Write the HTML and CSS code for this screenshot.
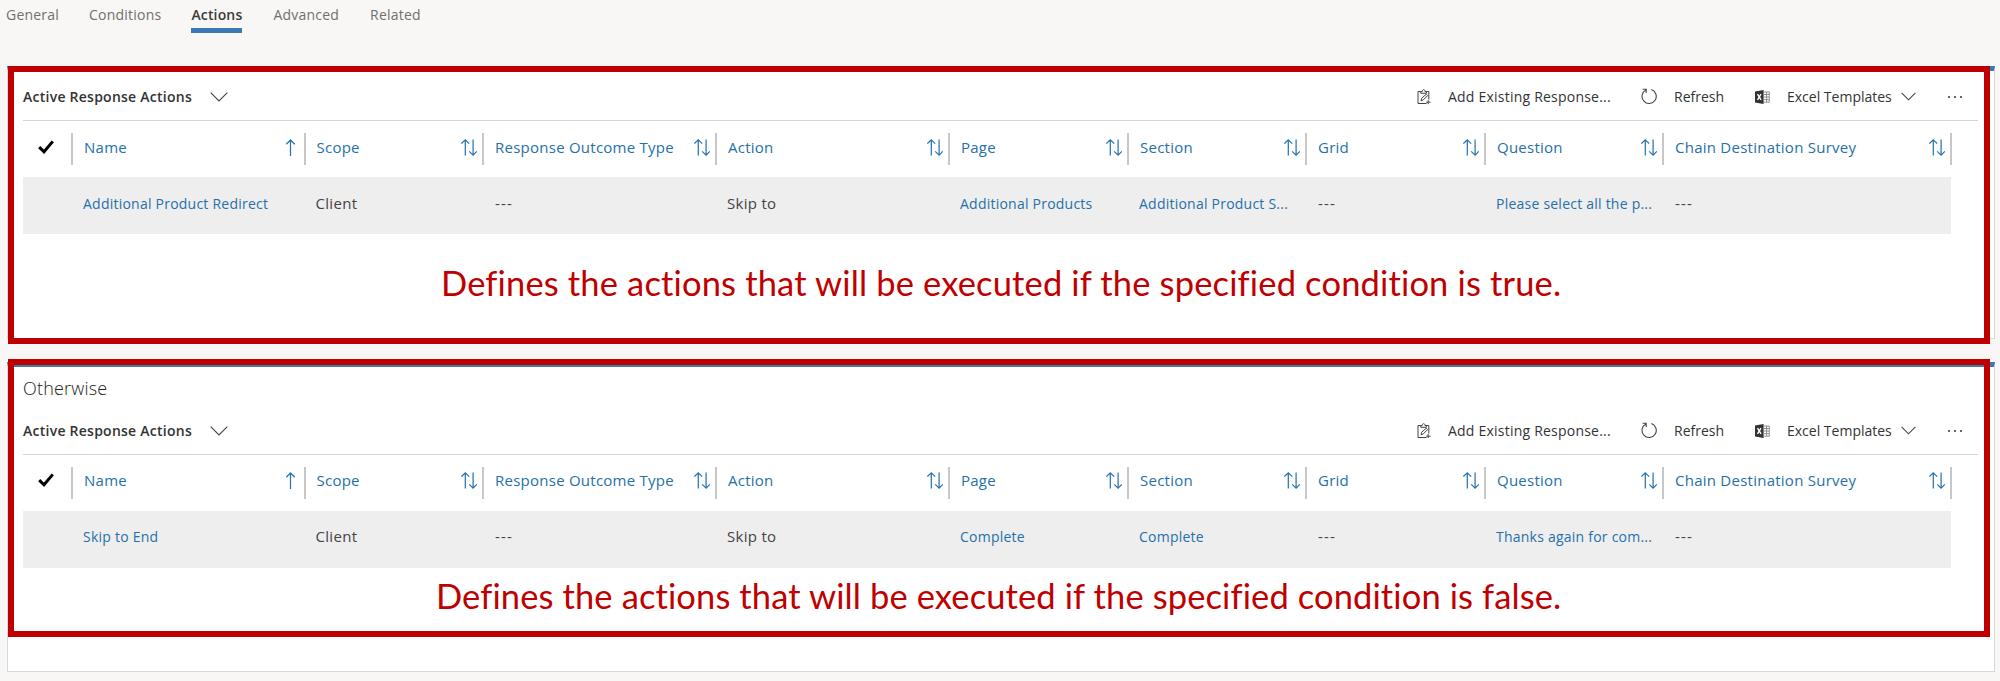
FILE: index.html
```html
<!DOCTYPE html>
<html lang="en">
<head>
<meta charset="utf-8">
<title>Response Actions</title>
<link rel="stylesheet" href="styles.css">
</head>
<body>
<svg class="defs" aria-hidden="true">
  <symbol id="chevron" viewBox="0 0 18 10"><path d="M.7.7 9 9 17.3.7"/></symbol>
  <symbol id="check" viewBox="0 0 16 14"><path d="M1.2 7.2 6 11.8 14.8 1.4"/></symbol>
  <symbol id="up" viewBox="0 0 16 17"><path d="M11.5 17V1M7.3 5.2 11.5 1l4.2 4.2"/></symbol>
  <symbol id="sort" viewBox="0 0 16 17"><path d="M4.3 16.5V1M.4 4.6 4.3.9l3.9 3.7M12.1.5v15.5M8.2 12.4l3.9 3.7 3.7-3.7"/></symbol>
  <symbol id="clip" viewBox="0 0 14 16"><path d="M3.8 2.5H1v12h8.5M9.2 2.5h2.6v8M3.8 4.3V2.6h1.4C5.2 0 8 0 8 2.6h1.4v1.7zM4 11.8l.7-2.6 4.6-4 1.3 1.4-4.3 4.3zM11.2 11.2v4M9.2 13.2h4.4"/></symbol>
  <symbol id="refresh" viewBox="0 0 16 17"><path d="M10.3 1.6A7.1 7.1 0 1 1 5 2M1.6 1.2H5.2V5"/></symbol>
  <symbol id="excel" viewBox="0 0 15 14"><path class="solid" d="M0 1.6 8.6 0v14L0 12.4z"/><path class="mark" d="m2.5 4.2 3.6 5.7M6 4.2 2.5 9.9"/><path class="sheet" d="M9 2h5.3v10.2H9M9 4.5h5M9 7h5M9 9.6h5M11.6 2v10"/></symbol>
</svg>

<nav class="tabs">
  <a>General</a><a>Conditions</a><a class="active">Actions</a><a>Advanced</a><a>Related</a>
</nav>

<main>
  <section class="panel panel-true">
    <div class="toolbar">
      <span class="view">Active Response Actions</span><svg class="view-chevron"><use href="#chevron"/></svg>
      <div class="commands">
        <svg class="i-clip"><use href="#clip"/></svg><span class="c-add">Add Existing Response...</span>
        <svg class="i-refresh"><use href="#refresh"/></svg><span class="c-refresh">Refresh</span>
        <svg class="i-excel"><use href="#excel"/></svg><span class="c-excel">Excel Templates</span>
        <svg class="i-chevron"><use href="#chevron"/></svg>
        <span class="more"><i></i><i></i><i></i></span>
      </div>
    </div>
    <div class="grid head">
      <div class="pick"><svg><use href="#check"/></svg></div>
      <div><span>Name</span><svg><use href="#up"/></svg></div>
      <div><span>Scope</span><svg><use href="#sort"/></svg></div>
      <div><span>Response Outcome Type</span><svg><use href="#sort"/></svg></div>
      <div><span>Action</span><svg><use href="#sort"/></svg></div>
      <div><span>Page</span><svg><use href="#sort"/></svg></div>
      <div><span>Section</span><svg><use href="#sort"/></svg></div>
      <div><span>Grid</span><svg><use href="#sort"/></svg></div>
      <div><span>Question</span><svg><use href="#sort"/></svg></div>
      <div><span>Chain Destination Survey</span><svg><use href="#sort"/></svg></div>
    </div>
    <div class="grid row">
      <div></div>
      <div class="link">Additional Product Redirect</div>
      <div>Client</div>
      <div class="dash">---</div>
      <div>Skip to</div>
      <div class="link">Additional Products</div>
      <div class="link">Additional Product S...</div>
      <div class="dash">---</div>
      <div class="link">Please select all the p...</div>
      <div class="dash">---</div>
    </div>
    <p class="caption">Defines the actions that will be executed if the specified condition is true.</p>
    <div class="frame"></div>
  </section>

  <section class="panel panel-false">
    <h2>Otherwise</h2>
    <div class="toolbar">
      <span class="view">Active Response Actions</span><svg class="view-chevron"><use href="#chevron"/></svg>
      <div class="commands">
        <svg class="i-clip"><use href="#clip"/></svg><span class="c-add">Add Existing Response...</span>
        <svg class="i-refresh"><use href="#refresh"/></svg><span class="c-refresh">Refresh</span>
        <svg class="i-excel"><use href="#excel"/></svg><span class="c-excel">Excel Templates</span>
        <svg class="i-chevron"><use href="#chevron"/></svg>
        <span class="more"><i></i><i></i><i></i></span>
      </div>
    </div>
    <div class="grid head">
      <div class="pick"><svg><use href="#check"/></svg></div>
      <div><span>Name</span><svg><use href="#up"/></svg></div>
      <div><span>Scope</span><svg><use href="#sort"/></svg></div>
      <div><span>Response Outcome Type</span><svg><use href="#sort"/></svg></div>
      <div><span>Action</span><svg><use href="#sort"/></svg></div>
      <div><span>Page</span><svg><use href="#sort"/></svg></div>
      <div><span>Section</span><svg><use href="#sort"/></svg></div>
      <div><span>Grid</span><svg><use href="#sort"/></svg></div>
      <div><span>Question</span><svg><use href="#sort"/></svg></div>
      <div><span>Chain Destination Survey</span><svg><use href="#sort"/></svg></div>
    </div>
    <div class="grid row">
      <div></div>
      <div class="link">Skip to End</div>
      <div>Client</div>
      <div class="dash">---</div>
      <div>Skip to</div>
      <div class="link">Complete</div>
      <div class="link">Complete</div>
      <div class="dash">---</div>
      <div class="link">Thanks again for com...</div>
      <div class="dash">---</div>
    </div>
    <p class="caption">Defines the actions that will be executed if the specified condition is false.</p>
    <div class="frame"></div>
  </section>
</main>
</body>
</html>
```
FILE: styles.css
```css
* { box-sizing: border-box; }
body {
  margin: 0;
  height: 681px;
  overflow: hidden;
  background: #f8f7f5;
  color: #444;
  font-family: "Open Sans", "Noto Sans", sans-serif;
  white-space: nowrap;
}
svg { display: block; flex: none; fill: none; stroke: #444; stroke-width: 1.1; }
.defs { position: absolute; width: 0; height: 0; }

.tabs { display: flex; height: 66px; padding-left: 6px; color: #707070; font-size: 14px; letter-spacing: .22px; }
.tabs a { height: 33px; line-height: 29px; margin-right: 30px; }
.tabs a:nth-child(3), .tabs a:nth-child(4) { margin-right: 31px; }
.tabs .active { width: 51px; border-bottom: 5px solid #3a78b6; color: #3b3b3b; font-weight: 600; letter-spacing: .15px; }

main { display: flex; flex-direction: column; gap: 23px; padding: 0 5px 0 7px; }
.panel {
  position: relative;
  background: #fff;
  border: 1px solid #d8d8d8;
  border-width: 0 1px 1px;
  padding: 5px 0 0 15px;
  border-top: 5px solid #3a78b6;
}
.panel-true { height: 273px; padding-top: 7px; }
.panel-false { height: 310px; }
.frame { position: absolute; left: 0; top: -5px; width: 1982px; height: 278px; border: 6px solid #c00000; }
.panel-false .frame { top: -8px; }

h2 { margin: 0; height: 43px; font-size: 18px; line-height: 32px; font-weight: 300; color: #222; letter-spacing: .2px; }

.toolbar { display: flex; align-items: center; width: 1955px; height: 43px; border-bottom: 1px solid #d6d6d6; padding-bottom: 5px; }
.panel-false .toolbar { height: 40px; padding-bottom: 8px; }
.view { width: 187px; font-size: 14px; font-weight: 600; color: #333; letter-spacing: .25px; }
.view-chevron { width: 18px; height: 10px; }
.commands { display: flex; align-items: center; margin-left: auto; width: 561px; color: #333; font-size: 14px; }
.i-clip { width: 14px; height: 16px; margin-right: 17px; stroke-width: 1; }
.c-add { width: 193px; letter-spacing: .22px; }
.i-refresh { width: 16px; height: 17px; margin-right: 17px; }
.c-refresh { width: 81px; }
.i-excel { width: 15px; height: 14px; margin-right: 17px; }
.i-excel, .solid { fill: #333; }
.solid { stroke: none; }
.mark { stroke: #fff; stroke-width: 1.4; }
.sheet { fill: none; stroke: #777; stroke-width: .8; }
.c-excel { width: 114px; }
.i-chevron { width: 15px; height: 9px; margin-right: 32px; stroke-width: 1.3; }
.more { display: flex; gap: 4px; }
.more i { width: 2px; height: 2px; background: #666; }

.grid { display: grid; grid-template-columns: 50px 232.5px 178.5px 233px 233px 179px 178px 179px 178px 288px; width: 1928px; }
.grid > div { display: flex; align-items: center; padding-left: 10px; }
.head { height: 32px; margin-top: 12px; color: #2670a9; font-size: 15px; letter-spacing: .25px; }
.head > div { justify-content: space-between; padding: 0 5px 4px 11px; border-right: 2px solid #c8c8c8; }
.head svg { width: 16px; height: 17px; stroke: #2b75ae; stroke-width: 1.25; }
.head > div:nth-child(2) { padding-right: 9px; }
.head .pick { padding-left: 15px; }
.head .pick svg { height: 14px; stroke: #000; stroke-width: 3; }
.row { height: 57px; margin-top: 12px; background: #eee; font-size: 15px; letter-spacing: .3px; }
.row > div { padding-bottom: 5px; }
.row .link { color: #2670a9; font-size: 14px; letter-spacing: .23px; }
.row .dash { padding-left: 11px; letter-spacing: 1.2px; }
.panel-false .head > div { padding-bottom: 6px; }
.panel-false .row > div { padding-bottom: 7px; }

.caption { margin: 24px 0 0 418px; color: #c00000; font-family: Lato, sans-serif; font-size: 34.5px; line-height: 50px; letter-spacing: .15px; }
.panel-false .caption { margin: 3px 0 0 413px; letter-spacing: .11px; }
```
